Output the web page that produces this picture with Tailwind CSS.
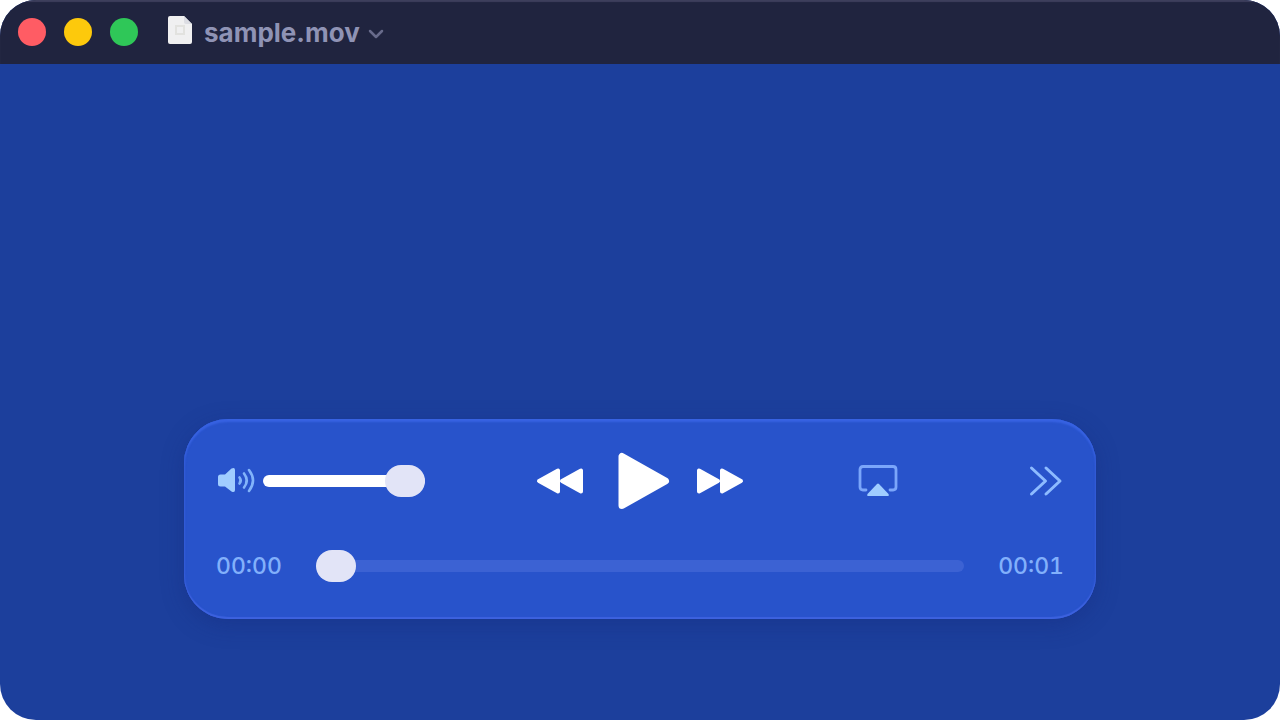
<!DOCTYPE html>
<html lang="en">
<head>
    <meta charset="UTF-8">
    <meta name="viewport" content="width=device-width, initial-scale=1.0">
    <title>sample.mov</title>
    <script src="https://cdn.jsdelivr.net/npm/@tailwindcss/browser@4"></script>
</head>
<body class="bg-white font-['Inter','Liberation_Sans',sans-serif]">
    <div class="flex min-h-screen flex-col overflow-hidden rounded-[36px] bg-[#1c3f9c]">
        <!-- Title bar -->
        <header class="flex h-16 items-center bg-[#20243f] pl-[18px] shadow-[inset_0_2px_1px_#3d3f5c]">
            <div class="flex gap-[18px]">
                <button type="button" aria-label="Close" class="size-7 rounded-full bg-[#ff5c64]"></button>
                <button type="button" aria-label="Minimize" class="size-7 rounded-full bg-[#fdc90c]"></button>
                <button type="button" aria-label="Zoom" class="size-7 rounded-full bg-[#2fc758]"></button>
            </div>
            <svg class="ml-[30px] h-8 w-6" viewBox="0 0 24 32" aria-hidden="true">
                <path d="M2 0h14l8 8v18a2 2 0 0 1-2 2H2a2 2 0 0 1-2-2V2a2 2 0 0 1 2-2z" fill="#f0f0f1"/>
                <path d="M16 0v6a2 2 0 0 0 2 2h6z" fill="#dcdde3"/>
                <path d="M8 10h8v8H8z" fill="none" stroke="#e2e2df" stroke-width="2"/>
            </svg>
            <button type="button" class="ml-3 flex items-center gap-2 pt-0.5 text-[#8f93b5]">
                <h1 class="text-[26px] leading-8 font-bold">sample.mov</h1>
                <svg class="mt-1 h-3 w-4" viewBox="0 0 16 12" fill="none" stroke="#686b8b" stroke-width="2.5" stroke-linecap="round" stroke-linejoin="round" aria-hidden="true">
                    <path d="M2 2l6 6 6-6"/>
                </svg>
            </button>
        </header>

        <!-- Video area -->
        <main class="flex flex-1 flex-col justify-end px-[184px] pb-[101px]">
            <section aria-label="Playback controls" class="flex flex-col gap-[39px] rounded-[44px] bg-[#2853cb] px-8 pt-8 pb-[37px] shadow-[inset_0_3px_2px_#3762e2,inset_0_-2px_1px_#3d62df,inset_0_0_2px_1px_#3159d2,0_6px_22px_rgba(20,40,120,0.35)]">
                <div class="grid h-15 grid-cols-3 items-center">
                    <div class="flex items-center gap-2">
                        <svg class="h-7 w-[39px]" viewBox="0 0 39 28" fill="none" stroke="#82b4fa" stroke-width="2.6" stroke-linecap="round" aria-hidden="true">
                            <path d="M4.500 7.500H9l6.500-6q3.500-1.500 3.500 1.500v20q0 3-3.500 1.500L9 19.500H4.500q-2.500 0-2.500-2.500v-7Q2 7.500 4.500 7.500z" fill="#a0cdff" stroke="none"/>
                            <path d="M23.500 10.500q2.500 3 0 6"/>
                            <path d="M28 6.500q5.500 7 0 14"/>
                            <path d="M33 3q8 10.500 0 21"/>
                        </svg>
                        <input type="range" aria-label="Volume" min="0" max="100" value="100" class="h-8 w-[162px] appearance-none bg-transparent [&::-webkit-slider-runnable-track]:h-3 [&::-webkit-slider-runnable-track]:rounded-full [&::-webkit-slider-runnable-track]:bg-white [&::-webkit-slider-thumb]:-mt-[10px] [&::-webkit-slider-thumb]:h-8 [&::-webkit-slider-thumb]:w-10 [&::-webkit-slider-thumb]:appearance-none [&::-webkit-slider-thumb]:rounded-full [&::-webkit-slider-thumb]:bg-[#e2e4f7]">
                    </div>
                    <div class="flex items-center justify-center gap-8">
                        <button type="button" aria-label="Rewind">
                            <svg class="h-7 w-12" viewBox="0 0 48 28" fill="#fff" stroke="#fff" stroke-width="4" stroke-linejoin="round" aria-hidden="true">
                                <path d="M22 3.500v21L3 14z"/>
                                <path d="M45 3.500v21L26 14z"/>
                            </svg>
                        </button>
                        <button type="button" aria-label="Play">
                            <svg class="h-15 w-12" viewBox="-4 0 48 60" fill="#fff" stroke="#fff" stroke-width="7" stroke-linejoin="round" overflow="visible" aria-hidden="true">
                                <path d="M2 5.500v49L45.500 30z"/>
                            </svg>
                        </button>
                        <button type="button" aria-label="Fast forward">
                            <svg class="h-7 w-12" viewBox="0 0 48 28" fill="#fff" stroke="#fff" stroke-width="4" stroke-linejoin="round" aria-hidden="true">
                                <path d="M3 3.500v21L22 14z"/>
                                <path d="M26 3.500v21L45 14z"/>
                            </svg>
                        </button>
                    </div>
                    <div class="flex items-center justify-end gap-[130px]">
                        <button type="button" aria-label="AirPlay">
                            <svg class="h-8 w-10" viewBox="0 0 40 32" fill="none" stroke="#7ba6fa" stroke-width="2.8" stroke-linecap="round" aria-hidden="true">
                                <path d="M8 25H5q-3 0-3-3V4.500q0-3 3-3h30q3 0 3 3V22q0 3-3 3h-3"/>
                                <path d="M19 19q1-1 2 0l9.500 10q1 2-1 2h-19q-2 0-1-2z" fill="#a0cdff" stroke="none"/>
                            </svg>
                        </button>
                        <button type="button" aria-label="More">
                            <svg class="h-8 w-9" viewBox="0 0 36 32" fill="none" stroke="#8dbbff" stroke-width="3" stroke-linecap="round" stroke-linejoin="round" aria-hidden="true">
                                <path d="M3.500 3L17.500 16 3.500 29"/>
                                <path d="M18 3l14 13L18 29"/>
                            </svg>
                        </button>
                    </div>
                </div>
                <div class="flex h-8 items-center justify-between text-[23px] leading-8 font-medium text-[#82b0fb] tabular-nums">
                    <span>00:00</span>
                    <input type="range" aria-label="Position" min="0" max="100" value="0" class="mx-[34px] h-8 min-w-0 flex-1 appearance-none bg-transparent [&::-webkit-slider-runnable-track]:h-3 [&::-webkit-slider-runnable-track]:rounded-full [&::-webkit-slider-runnable-track]:bg-[#3c62d3] [&::-webkit-slider-thumb]:-mt-[10px] [&::-webkit-slider-thumb]:h-8 [&::-webkit-slider-thumb]:w-10 [&::-webkit-slider-thumb]:appearance-none [&::-webkit-slider-thumb]:rounded-full [&::-webkit-slider-thumb]:bg-[#e2e4f7]">
                    <span>00:01</span>
                </div>
            </section>
        </main>
    </div>
</body>
</html>
